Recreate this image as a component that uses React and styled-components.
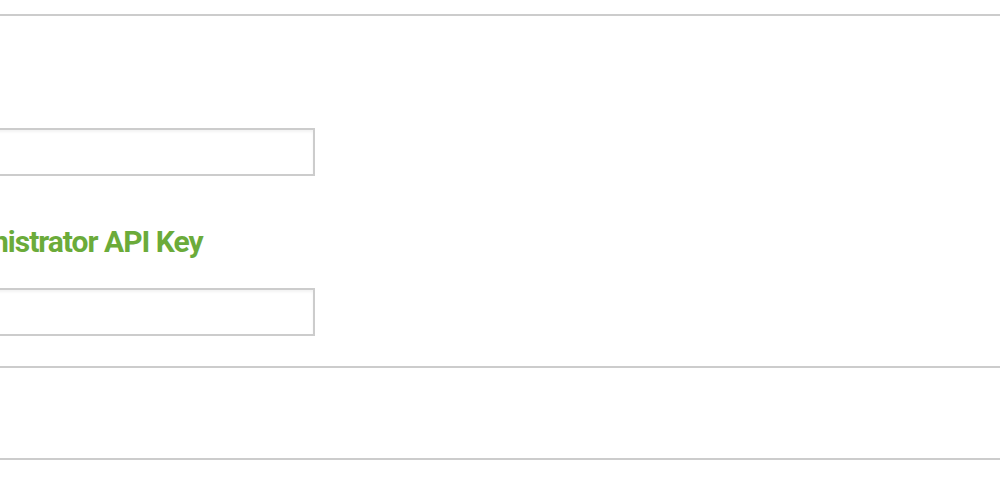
import React from "react";
import styled, { createGlobalStyle } from "styled-components";

const GlobalStyle = createGlobalStyle`
  html, body {
    margin: 0;
    padding: 0;
    background: #ffffff;
    font-family: Roboto, "Liberation Sans", sans-serif;
  }
`;

const Page = styled.div`
  padding-top: 14px;
  overflow: hidden;
`;

const Panel = styled.section`
  border-top: 2px solid #cccccc;
  border-bottom: 2px solid #cccccc;
  padding: 48px 0 30px;
`;

const Form = styled.form`
  display: flex;
  flex-direction: column;
  gap: 48px;
  margin-left: -75px;
  width: 390px;
`;

const Field = styled.div`
  display: flex;
  flex-direction: column;
  gap: 28px;
`;

const Label = styled.label`
  min-height: 36px;
  font-size: 30px;
  line-height: 36px;
  font-weight: 700;
  letter-spacing: -1px;
  color: #6bab3a;
  white-space: nowrap;
`;

const Input = styled.input`
  box-sizing: border-box;
  width: 100%;
  height: 48px;
  margin: 0;
  padding: 0 12px;
  border: 2px solid #cccccc;
  border-radius: 0;
  background: #ffffff;
  box-shadow: inset 0 2px 3px rgba(0, 0, 0, 0.05);
  font-family: Roboto, "Liberation Sans", sans-serif;
  font-size: 20px;
  outline: none;
`;

const Footer = styled.div`
  height: 90px;
  border-bottom: 2px solid #cccccc;
`;

export default function App() {
  return (
    <Page>
      <GlobalStyle />
      <Panel>
        <Form onSubmit={(e) => e.preventDefault()}>
          <Field>
            <Label htmlFor="url" aria-label="URL" />
            <Input id="url" type="text" />
          </Field>
          <Field>
            <Label htmlFor="apikey">Administrator API Key</Label>
            <Input id="apikey" type="text" />
          </Field>
        </Form>
      </Panel>
      <Footer />
    </Page>
  );
}
